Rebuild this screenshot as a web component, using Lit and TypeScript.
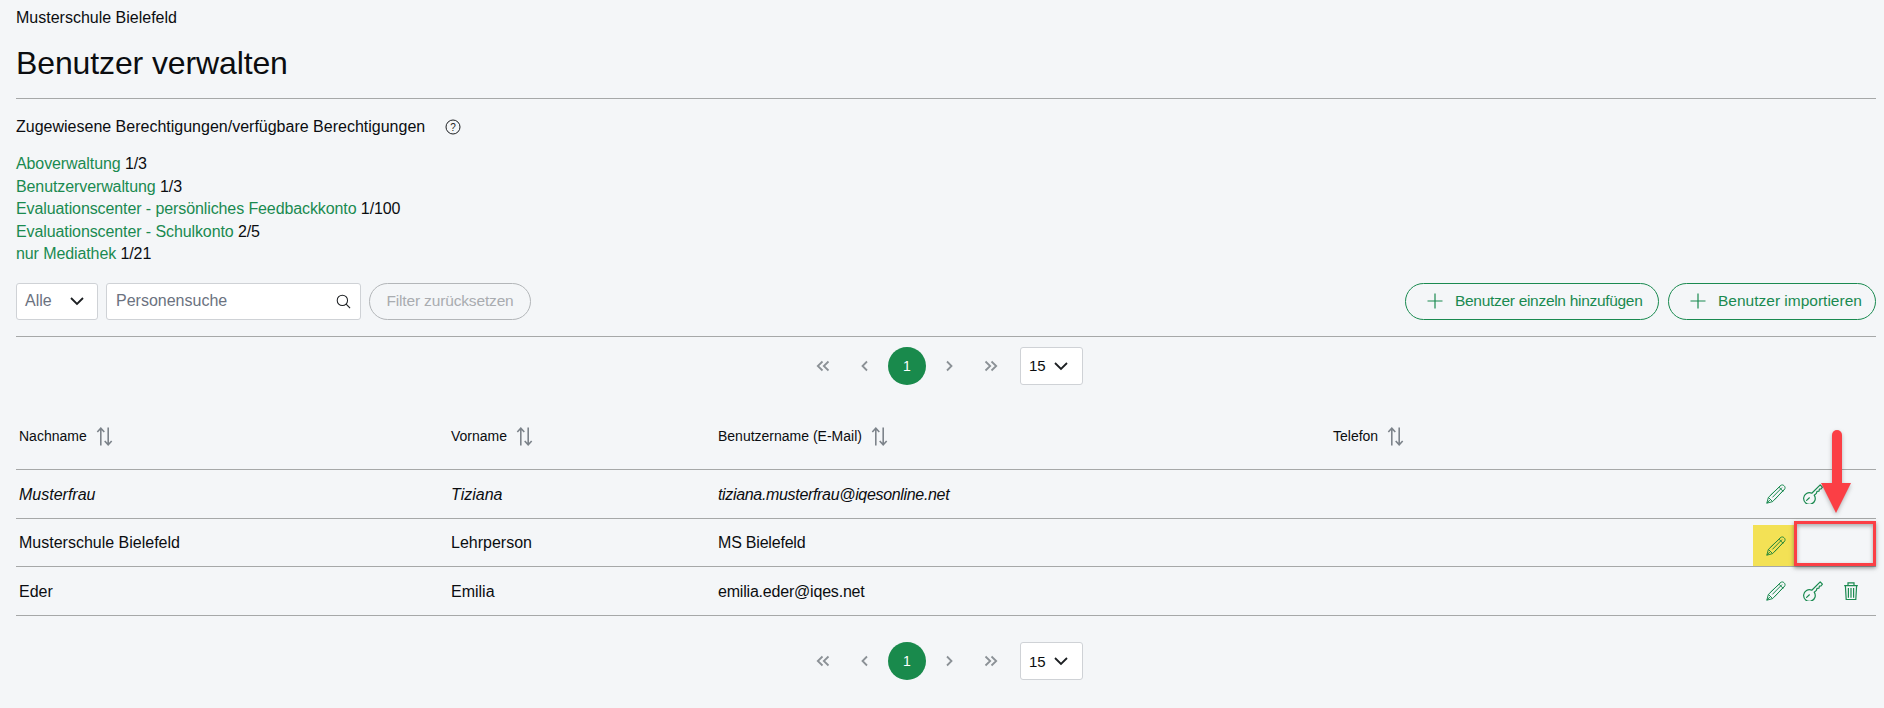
import { LitElement, html, css, svg } from "lit";
import { customElement } from "lit/decorators.js";

const chevDown = html`<svg class="chev" viewBox="0 0 16 10" width="16" height="10"><path d="M2 2l6 6 6-6" fill="none" stroke="#1c1f22" stroke-width="1.8"/></svg>`;
const plus = html`<svg class="plus" viewBox="0 0 16 16" width="16" height="16"><path d="M8 0.5v15M0.5 8h15" fill="none" stroke="#1a8a50" stroke-width="1.2"/></svg>`;
const sort = html`<svg class="sort" viewBox="0 0 16 18" width="17" height="19"><path d="M4.5 17.5V1.5M1.2 4.8L4.5 1.2 7.8 4.8M11.5 0.5v16M8.2 13.2l3.3 3.6 3.3-3.6" fill="none" stroke="#7c838a" stroke-width="1.5"/></svg>`;

const pencil = svg`<path d="M.8 19.2L2.4 13.4 14.6 1.6c1-.9 2.4-.9 3.3 0l.5.5c.9.9.9 2.4 0 3.3L6.6 17.6zM2.4 13.4l4.2 4.2M.8 19.2l3-3.2M13 3.2l4.2 4.2M4.4 11.4L14.6 1.6M8.6 15.6L18.4 5.4M6.4 13.4L16 3.6" fill="none" stroke="currentColor" stroke-width="1" stroke-linejoin="round"/>`;
const key = svg`<path d="M8.8 9.2L17.2.9 19.4 3.1 18 5l-1.6.2-.4 2-2 .2-.6 2-2.2 1.8A5.8 5.8 0 1 1 8.8 9.2zM3.6 16.4l2.8-2.6" fill="none" stroke="currentColor" stroke-width="1.2" stroke-linejoin="round" stroke-linecap="round"/>`;
const trash = svg`<path d="M.2 3.6h13.6M4 3.4V.8h6v2.6M1.4 3.8L2.2 17.5h9.6l.8-13.7M4.4 6v9.8M7 6v9.8M9.6 6v9.8" fill="none" stroke="currentColor" stroke-width="1.2"/>`;

type Row = { last: string; first: string; mail: string; italic?: boolean; mode: string };
const rows: Row[] = [
  { last: "Musterfrau", first: "Tiziana", mail: "tiziana.musterfrau@iqesonline.net", italic: true, mode: "top" },
  { last: "Musterschule Bielefeld", first: "Lehrperson", mail: "MS Bielefeld", mode: "mid" },
  { last: "Eder", first: "Emilia", mail: "emilia.eder@iqes.net", mode: "all" },
];

const rights: [string, string][] = [
  ["Aboverwaltung", "1/3"],
  ["Benutzerverwaltung", "1/3"],
  ["Evaluationscenter - persönliches Feedbackkonto", "1/100"],
  ["Evaluationscenter - Schulkonto", "2/5"],
  ["nur Mediathek", "1/21"],
];

@customElement("app-root")
export class AppRoot extends LitElement {
  static styles = css`
    :host {
      display: block;
      position: relative;
      height: 708px;
      overflow: hidden;
      box-sizing: border-box;
      padding: 0 8px 0 16px;
      background: #f4f6f8;
      color: #0b0d10;
      font-family: "Liberation Sans", Arial, sans-serif;
      font-size: 16px;
    }
    .crumb { padding-top: 8px; line-height: 20px; }
    h1 {
      margin: 16px 0 0;
      font-size: 32px;
      font-weight: 400;
      line-height: 39px;
      letter-spacing: -0.12px;
      padding-bottom: 15px;
      border-bottom: 1px solid #a6a8a8;
    }
    .assigned { display: flex; align-items: center; gap: 20px; margin-top: 18px; line-height: 20px; }
    .help { display: block; }
    .rights { margin-top: 16px; line-height: 22.5px; letter-spacing: -0.1px; }
    .rights a { color: #1a8a50; text-decoration: none; }
    .filters { display: flex; align-items: center; margin-top: 17px; height: 37px; white-space: nowrap; }
    .select {
      display: flex; align-items: center; justify-content: space-between;
      box-sizing: border-box; height: 37px; background: #fff;
      border: 1px solid #cfd2d6; border-radius: 3px;
    }
    .all { width: 82px; padding: 0 12px 0 8px; color: #6b7280; margin-right: 8px; }
    .search {
      display: flex; align-items: center; justify-content: space-between;
      box-sizing: border-box; width: 255px; height: 37px; padding: 0 9px;
      background: #fff; border: 1px solid #cfd2d6; border-radius: 3px; color: #6b7280;
      margin-right: 8px;
    }
    .reset {
      box-sizing: border-box; width: 162px; height: 37px; border: 1px solid #b3b6b9;
      border-radius: 19px; display: flex; align-items: center; justify-content: center; color: #a9acb0;
      font-size: 15.5px; letter-spacing: -0.15px;
    }
    .spacer { flex: 1; }
    .btn {
      box-sizing: border-box; height: 37px; border: 1px solid #1a8a50; border-radius: 19px;
      display: flex; align-items: center; gap: 12px; padding: 0 0 0 21px; color: #1a8a50;
      font-size: 15.5px;
    }
    .b1 { width: 254px; margin-right: 9px; letter-spacing: -0.3px; }
    .b2 { width: 208px; }
    .divider { border-bottom: 1px solid #a6a8a8; margin-top: 16px; }
    .pager { display: flex; align-items: center; justify-content: center; height: 38px; padding-right: 7px; margin-top: 10px; }
    .pg { width: 42px; display: flex; justify-content: center; }
    .cur {
      width: 38px; height: 38px; border-radius: 50%; background: #198a4c; color: #fff; margin: 0 2px;
      display: flex; align-items: center; justify-content: center; font-size: 14px;
    }
    .num { width: 63px; padding: 0 13px 0 8px; margin-left: 8px; font-size: 15px; }
    .pager .select { height: 38px; }
    .thead, .row {
      display: grid; grid-template-columns: 432px 267px 615px 1fr auto;
      border-bottom: 1px solid #a6a8a8; align-items: center;
    }
    .thead { margin-top: 19px; height: 65.9px; font-size: 14px; }
    .thead > div { display: flex; align-items: center; gap: 9px; padding-left: 3px; }
    .row { height: 48.5px; box-sizing: border-box; }
    .row > .c { padding-left: 3px; padding-top: 1px; }
    .row > .mail { letter-spacing: -0.2px; }
    .row.italic { font-style: italic; }
    .row.italic > .mail { letter-spacing: -0.33px; }
    .acts { display: flex; align-items: center; height: 100%; width: 123px; color: #1a8a50; }
    .act { width: 38px; height: 41px; display: flex; align-items: center; justify-content: center; }
    .edit { width: 41px; justify-content: flex-end; padding-right: 8px; box-sizing: border-box; }
    .hl { background: #f3e155; color: #2c8a3a; align-self: flex-end; }
    .bottom { margin-top: 26.5px; }
    .mark { position: absolute; left: 1794px; top: 521px; width: 82px; height: 45px; box-sizing: border-box; border: 3px solid #fb3f45; box-shadow: 0 2px 4px rgba(60,60,60,.55), inset 0 2px 4px rgba(60,60,60,.4); }
    .arrow { position: absolute; left: 1815px; top: 426px; filter: drop-shadow(0 2px 2px rgba(60,60,60,.35)); }
  `;

  private chevs(d: string) {
    return html`<svg viewBox="0 0 14 12" width="14" height="12"><path d="${d}" fill="none" stroke="#8b9196" stroke-width="1.8"/></svg>`;
  }

  private pager(extra = "") {
    return html`<div class="pager ${extra}">
      <div class="pg">${this.chevs("M6.5 1.5L1.8 6l4.7 4.5M12.5 1.5L7.8 6l4.7 4.5")}</div>
      <div class="pg">${this.chevs("M9 1.5L4.5 6 9 10.5")}</div>
      <div class="cur">1</div>
      <div class="pg">${this.chevs("M5 1.5L9.5 6 5 10.5")}</div>
      <div class="pg">${this.chevs("M1.5 1.5L6.2 6l-4.7 4.5M7.5 1.5L12.2 6l-4.7 4.5")}</div>
      <div class="select num"><span>15</span>${chevDown}</div>
    </div>`;
  }

  private icon(p: unknown, w = 20, h = 20) {
    return html`<svg viewBox="0 0 ${w} ${h}" width="${w}" height="${h}">${p}</svg>`;
  }

  private actions(mode: string) {
    return html`<div class="acts">
      <div class="act edit ${mode === "mid" ? "hl" : ""}">${this.icon(pencil)}</div>
      ${mode !== "mid" ? html`<div class="act">${this.icon(key)}</div>` : ""}
      ${mode === "all" ? html`<div class="act">${this.icon(trash, 14, 18)}</div>` : ""}
    </div>`;
  }

  render() {
    return html`
      <div class="crumb">Musterschule Bielefeld</div>
      <h1>Benutzer verwalten</h1>
      <div class="assigned">
        <span>Zugewiesene Berechtigungen/verfügbare Berechtigungen</span>
        <svg class="help" viewBox="0 0 16 16" width="16" height="16"><circle cx="8" cy="8" r="7" fill="none" stroke="#1c1f22" stroke-width="1"/><text x="8" y="11.6" text-anchor="middle" font-size="10" font-family="Liberation Sans" fill="#1c1f22">?</text></svg>
      </div>
      <div class="rights">
        ${rights.map(([n, v]) => html`<div><a href="#">${n}</a> ${v}</div>`)}
      </div>
      <div class="filters">
        <div class="select all"><span>Alle</span>${chevDown}</div>
        <div class="search"><span>Personensuche</span>
          <svg viewBox="0 0 16 16" width="15" height="15"><circle cx="6.8" cy="6.8" r="5.5" fill="none" stroke="#1c1f22" stroke-width="1.1"/><path d="M10.8 10.8L15 15" stroke="#1c1f22" stroke-width="1.2"/></svg>
        </div>
        <div class="reset">Filter zurücksetzen</div>
        <div class="spacer"></div>
        <div class="btn b1">${plus}<span>Benutzer einzeln hinzufügen</span></div>
        <div class="btn b2">${plus}<span>Benutzer importieren</span></div>
      </div>
      <div class="divider"></div>
      ${this.pager()}
      <div class="thead">
        <div>Nachname ${sort}</div>
        <div>Vorname ${sort}</div>
        <div>Benutzername (E-Mail) ${sort}</div>
        <div>Telefon ${sort}</div>
      </div>
      ${rows.map((r) => html`<div class="row ${r.italic ? "italic" : ""}">
        <div class="c">${r.last}</div><div class="c">${r.first}</div><div class="c mail">${r.mail}</div><div class="c"></div>
        ${this.actions(r.mode)}
      </div>`)}
      ${this.pager("bottom")}
      <div class="mark"></div>
      <svg class="arrow" viewBox="0 0 42 90" width="42" height="90">
        <path d="M22 9v56" stroke="#fb3f45" stroke-width="10" stroke-linecap="round"/>
        <path d="M6 57h30L21 87z" fill="#fb3f45"/>
      </svg>
    `;
  }
}
